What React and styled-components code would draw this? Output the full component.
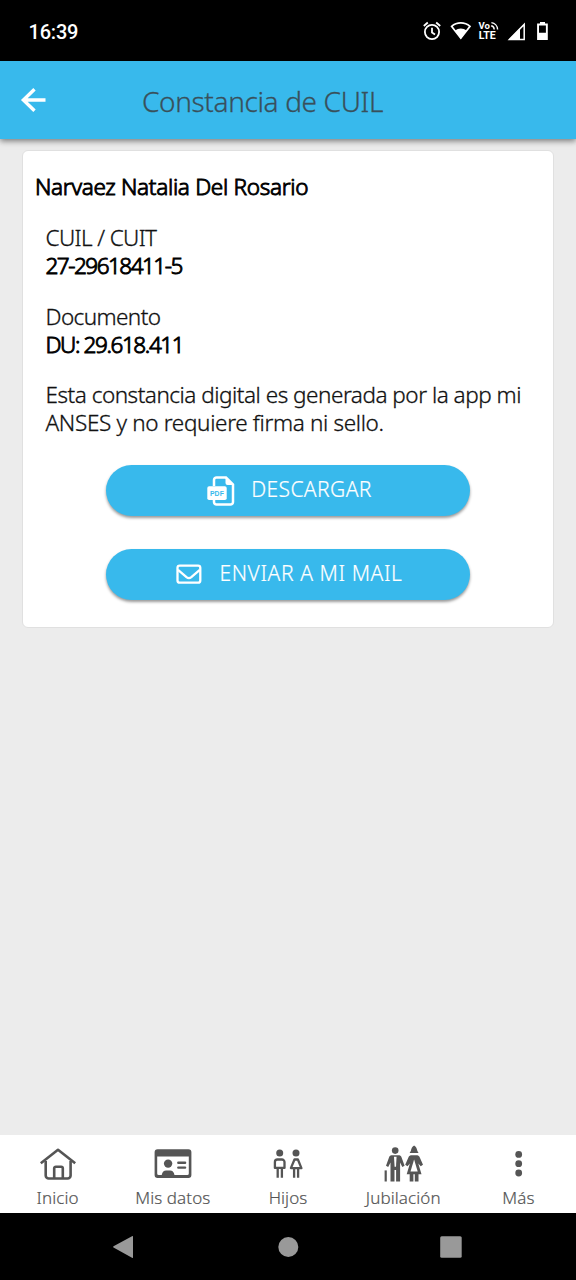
import React from "react";
import styled, { createGlobalStyle } from "styled-components";

const GlobalStyle = createGlobalStyle`
  * {
    box-sizing: border-box;
  }

  body {
    margin: 0;
    background: #ececec;
    font-family: "Noto Sans", "Open Sans", sans-serif;
  }
`;

// Styled Components
const Screen = styled.div`
  display: flex;
  flex-direction: column;
  width: 576px;
  height: 1280px;
  background: #ececec;
  overflow: hidden;
`;

const StatusBar = styled.div`
  display: flex;
  align-items: center;
  justify-content: space-between;
  flex: none;
  height: 61px;
  padding: 0 18px 0 28.5px;
  background: #000000;
  color: #ffffff;
`;

const Clock = styled.div`
  font-family: Roboto, sans-serif;
  font-size: 20px;
  font-weight: 500;
  letter-spacing: -0.2px;
  line-height: 24px;
  padding-top: 2px;
`;

const StatusIcons = styled.div`
  display: flex;

  svg {
    display: block;
    width: 28px;
    height: 28px;
  }
`;

const Header = styled.header`
  display: grid;
  grid-template-columns: 142px 1fr;
  align-items: center;
  flex: none;
  height: 78px;
  background: #38b9ec;
  box-shadow: 0 2px 6px rgba(0, 0, 0, 0.5);
  z-index: 1;
`;

const BackButton = styled.button`
  display: flex;
  width: 48px;
  height: 48px;
  margin-left: 10px;
  padding: 0;
  border: none;
  background: none;
  color: #ffffff;
`;

const PageTitle = styled.h1`
  margin: 0;
  padding-top: 1px;
  color: #38505b;
  font-size: 28px;
  font-weight: 300;
  letter-spacing: -0.36px;
  line-height: 36px;
  white-space: nowrap;
  -webkit-text-stroke: 0.3px #38505b;
`;

const Content = styled.main`
  flex: 1;
  padding: 11px 22px;
`;

const Card = styled.section`
  height: 478px;
  padding: 22px 12px 0;
  border: 1px solid #e0e0e0;
  border-radius: 6px;
  background: #ffffff;
  color: #111111;
  font-size: 22.5px;
  font-weight: 300;
  line-height: 28px;
`;

const FullName = styled.h2`
  margin: 0 0 23px;
  font-size: 22.5px;
  font-weight: 300;
  letter-spacing: -0.3px;
  line-height: 28px;
  color: #000000;
  -webkit-text-stroke: 0.9px #000000;
`;

const Field = styled.div`
  margin: 0 0 22.5px 10.5px;
`;

const FieldLabel = styled.div`
  letter-spacing: -0.6px;
  -webkit-text-stroke: 0.3px #111111;
`;

const FieldValue = styled.div`
  color: #000000;
  letter-spacing: ${(props) => props.$tracking}px;
  -webkit-text-stroke: 0.9px #000000;
`;

const Notice = styled.p`
  margin: 0 0 28px 10.5px;
  white-space: nowrap;
  -webkit-text-stroke: 0.3px #111111;
`;

const NoticeLine = styled.span`
  display: block;
  letter-spacing: ${(props) => props.$tracking}px;
`;

const Actions = styled.div`
  display: flex;
  flex-direction: column;
  align-items: center;
  gap: 33px;
`;

const ActionButton = styled.button`
  display: flex;
  align-items: center;
  justify-content: center;
  gap: ${(props) => props.$gap}px;
  width: 364px;
  height: 51px;
  padding: 0 0 0 3px;
  border: none;
  border-radius: 26px;
  background: #38b9ec;
  box-shadow: 0 2px 3px rgba(0, 0, 0, 0.4);
  color: #ffffff;
  font-family: inherit;
  font-size: 21px;
  font-weight: 300;
  letter-spacing: ${(props) => props.$tracking}px;
  line-height: 28px;
  white-space: nowrap;
  -webkit-text-stroke: 0.2px #ffffff;
`;

const ActionLabel = styled.span`
  padding-bottom: 3px;
`;

const TabBar = styled.nav`
  display: grid;
  grid-template-columns: repeat(5, 1fr);
  flex: none;
  height: 78px;
  background: #ffffff;
`;

const Tab = styled.a`
  display: flex;
  flex-direction: column;
  align-items: center;
  padding-top: 7px;
  color: #555555;

  svg {
    display: block;
    width: 44px;
    height: 44px;
  }
`;

const TabLabel = styled.span`
  padding-top: 1px;
  font-size: 17px;
  font-weight: 300;
  letter-spacing: 0.1px;
  line-height: 22px;
  -webkit-text-stroke: 0.2px #555555;
`;

const SystemNav = styled.div`
  display: flex;
  align-items: center;
  justify-content: space-between;
  flex: none;
  height: 67px;
  padding: 0 111px;
  background: #000000;
`;

const PdfIcon = () => (
  <svg width="28" height="30" viewBox="0 0 28 30" fill="none">
    <path
      d="M7 10V4a2.5 2.5 0 0 1 2.5-2.5H19l7 7V26a2.5 2.5 0 0 1-2.5 2.5h-14A2.5 2.5 0 0 1 7 26v-2"
      stroke="#fff"
      strokeWidth="2.5"
    />
    <path d="M18.500 1l8 8h-6a2 2 0 0 1-2-2z" fill="#fff" />
    <rect x="0.3" y="10.3" width="19.4" height="13.7" rx="1.8" fill="#fff" />
    <text
      x="10"
      y="19.6"
      textAnchor="middle"
      fontFamily="Liberation Sans, sans-serif"
      fontSize="6.8"
      fontWeight="700"
      letterSpacing="0.2"
      stroke="none"
      fill="#38b9ec"
    >
      PDF
    </text>
  </svg>
);

const MailIcon = () => (
  <svg width="26" height="22" viewBox="0 0 26 22" fill="none" stroke="#fff" strokeWidth="2.3">
    <rect x="1.5" y="1.6" width="22.8" height="17" rx="2.2" />
    <path d="M2 5.8l8.5 7.3a3.8 3.8 0 0 0 4.8 0L23.8 5.8" />
  </svg>
);

const AlarmIcon = () => (
  <svg viewBox="0 0 28 28" fill="none" stroke="#fff" strokeWidth="1.8">
    <circle cx="14" cy="15" r="7.1" />
    <path d="M14 10.8v4.600l3 2" />
    <path d="M5.8 9l4-3.5M22.2 9l-4-3.5" />
  </svg>
);

const WifiIcon = () => (
  <svg viewBox="0 0 28 28">
    <path d="M5.6 9.3a14 14 0 0 1 18.4 0L14.8 21.2z" fill="none" stroke="#fff" strokeWidth="1.7" />
    <path d="M9 13.6a9.5 9.5 0 0 1 11.6 0L14.8 22z" fill="#fff" />
  </svg>
);

const VolteIcon = () => (
  <svg viewBox="0 0 28 28" fill="#fff" fontFamily="Roboto, sans-serif" fontWeight="700">
    <text x="4.4" y="12.3" fontSize="9.6">Vo</text>
    <text x="4.7" y="22.4" fontSize="10.4" textLength="17" lengthAdjust="spacingAndGlyphs">LTE</text>
    <path
      d="M17.2 8.7a4 4 0 0 1 3 3.8M17.4 5.6a7.2 7.2 0 0 1 6.2 6.9"
      fill="none"
      stroke="#fff"
      strokeWidth="1.4"
    />
  </svg>
);

const SignalIcon = () => (
  <svg viewBox="0 0 28 28">
    <path d="M22.2 7.4v15H7.4z" fill="none" stroke="#fff" strokeWidth="1.5" />
    <path d="M18 11.2v11.6H6.6z" fill="#fff" />
  </svg>
);

const BatteryIcon = () => (
  <svg viewBox="0 0 28 28" fill="#fff">
    <path d="M10 5h5v1.6h2.8V23H7.1V6.6H10zM9 8.4v7.3h6.9V8.4z" fillRule="evenodd" />
  </svg>
);

const BackIcon = () => (
  <svg width="48" height="48" viewBox="0 0 48 48" fill="none" stroke="currentColor" strokeWidth="3.4">
    <path d="M35.5 24H13M24.5 13.2L13.4 24l11.1 10.8" />
  </svg>
);

const HomeIcon = () => (
  <svg viewBox="0 0 44 44" fill="none" stroke="currentColor" strokeWidth="2.6">
    <path d="M4.8 21.3L22 7.8l17.2 13.5" strokeLinejoin="round" />
    <path d="M9.7 19v14.5a3 3 0 0 0 3 3h18.9a3 3 0 0 0 3-3V19" />
    <path d="M18.2 36V26.3a1.6 1.6 0 0 1 1.6-1.6h5.4a1.6 1.6 0 0 1 1.6 1.6V36" />
  </svg>
);

const IdCardIcon = () => (
  <svg viewBox="0 0 44 44">
    <path
      d="M6.6 7.3h30.8a3 3 0 0 1 3 3v22.8a3 3 0 0 1-3 3H6.6a3 3 0 0 1-3-3V10.3a3 3 0 0 1 3-3zM6.2 14.6v17a1.5 1.5 0 0 0 1.5 1.5h3c.6-3.2 2.2-4.6 4.4-4.6h4c2.2 0 3.8 1.4 4.4 4.6h12.8a1.5 1.5 0 0 0 1.5-1.5v-17z"
      fill="currentColor"
      fillRule="evenodd"
    />
    <circle cx="17.1" cy="21.6" r="4.2" fill="currentColor" />
    <path d="M27.3 20.8h6.8M27.3 25.6h6.8" stroke="currentColor" strokeWidth="2.4" strokeLinecap="round" />
  </svg>
);

const ChildrenIcon = () => (
  <svg viewBox="0 0 44 44" fill="none" stroke="currentColor" strokeWidth="2.3" strokeLinejoin="round">
    <circle cx="13.7" cy="11" r="3.5" fill="currentColor" stroke="none" />
    <circle cx="30" cy="11" r="3.5" fill="currentColor" stroke="none" />
    <path d="M11.5 17.5h4.4a2.6 2.6 0 0 1 2.6 2.6v5.8H8.9v-5.800a2.6 2.6 0 0 1 2.6-2.6z" />
    <path d="M11.7 26v9.8M15.9 26v9.8" />
    <path d="M28.5 17.5h3.4l3.500 8.600H24.900z" />
    <path d="M28.100 26v9.800M32.100 26v9.800" />
  </svg>
);

const SeniorsIcon = () => (
  <svg viewBox="0 0 44 44" fill="currentColor">
    <circle cx="14.2" cy="8.6" r="3.3" />
    <path d="M10.4 13.2h7.8c1.3 0 1.9 1 2.4 2.2l3 8.3-2.3 1.3-2.2-4.6V39.500h-4V28h-1.600v11.500h-4V20.400L7.200 25l-2.200-1.300 3-8.300c.5-1.200 1.100-2.200 2.400-2.200z" />
    <path d="M13 14.800h2.600l-.6 10h-1.400z" fill="#fff" />
    <path d="M4.700 39.500V28.400" stroke="currentColor" strokeWidth="2.200" />
    <path d="M33.1 3.400c2 1 2.900 3.200 3.300 5.700l1.200 1.900h-9l1.200-1.900c.4-2.500 1.300-4.700 3.300-5.700z" />
    <path d="M30 13.2h6.200c1.300 0 2 1 2.600 2.200l3.200 7.400-2.300 1.500-2.400-2.900 3.200 10.900h-3v7.200h-3.700v-7.200h-1.400v7.200h-3.700v-7.200h-3l3.200-10.900-2.400 2.900-2.300-1.500 3.200-7.400c.6-1.200 1.300-2.200 2.600-2.200z" />
    <path d="M33.1 17.5l3.6 12h-7.2z" fill="#fff" />
  </svg>
);

const MoreIcon = () => (
  <svg viewBox="0 0 44 44" fill="currentColor">
    <circle cx="22.7" cy="12.4" r="3.4" />
    <circle cx="22.7" cy="21.7" r="3.4" />
    <circle cx="22.7" cy="31" r="3.4" />
  </svg>
);

const tabs = [
  { label: "Inicio", icon: HomeIcon },
  { label: "Mis datos", icon: IdCardIcon },
  { label: "Hijos", icon: ChildrenIcon },
  { label: "Jubilación", icon: SeniorsIcon },
  { label: "Más", icon: MoreIcon },
];

const App = () => {
  return (
    <>
      <GlobalStyle />
      <Screen>
        <StatusBar>
          <Clock>16:39</Clock>
          <StatusIcons>
            <AlarmIcon />
            <WifiIcon />
            <VolteIcon />
            <SignalIcon />
            <BatteryIcon />
          </StatusIcons>
        </StatusBar>

        <Header>
          <BackButton aria-label="Volver">
            <BackIcon />
          </BackButton>
          <PageTitle>Constancia de CUIL</PageTitle>
        </Header>

        <Content>
          <Card>
            <FullName>Narvaez Natalia Del Rosario</FullName>
            <Field>
              <FieldLabel>CUIL / CUIT</FieldLabel>
              <FieldValue $tracking={-1.5}>27-29618411-5</FieldValue>
            </Field>
            <Field>
              <FieldLabel>Documento</FieldLabel>
              <FieldValue $tracking={-1.4}>DU: 29.618.411</FieldValue>
            </Field>
            <Notice>
              <NoticeLine $tracking={-0.48}>Esta constancia digital es generada por la app mi</NoticeLine>
              <NoticeLine $tracking={-0.33}>ANSES y no requiere firma ni sello.</NoticeLine>
            </Notice>
            <Actions>
              <ActionButton $gap={16} $tracking={0.4}>
                <PdfIcon />
                <ActionLabel>DESCARGAR</ActionLabel>
              </ActionButton>
              <ActionButton $gap={17} $tracking={0.6}>
                <MailIcon />
                <ActionLabel>ENVIAR A MI MAIL</ActionLabel>
              </ActionButton>
            </Actions>
          </Card>
        </Content>

        <TabBar>
          {tabs.map(({ label, icon: Icon }) => (
            <Tab key={label}>
              <Icon />
              <TabLabel>{label}</TabLabel>
            </Tab>
          ))}
        </TabBar>

        <SystemNav>
          <svg width="24" height="24" viewBox="0 0 24 24" fill="#999">
            <path d="M22 1.5v21a.6.6 0 0 1-1 .3L2.5 12.6a.8.8 0 0 1 0-1.3L21 1.2a.6.6 0 0 1 1 .3z" />
          </svg>
          <svg width="24" height="24" viewBox="0 0 24 24" fill="#999">
            <circle cx="12.3" cy="12" r="10" />
          </svg>
          <svg width="24" height="24" viewBox="0 0 24 24" fill="#999" overflow="visible">
            <rect x="-0.8" y="1.3" width="21.5" height="21.5" rx="1.5" />
          </svg>
        </SystemNav>
      </Screen>
    </>
  );
};

export default App;
